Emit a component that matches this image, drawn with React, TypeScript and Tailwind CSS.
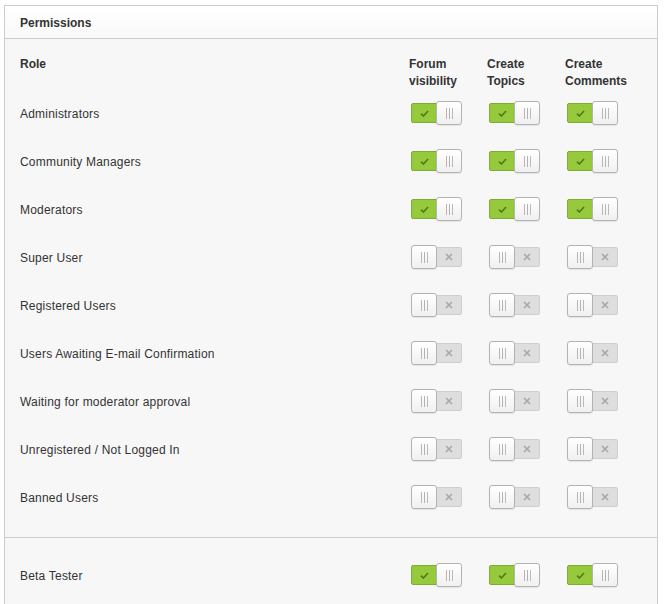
import React from "react";

const roles: { name: string; on: boolean }[] = [
  { name: "Administrators", on: true },
  { name: "Community Managers", on: true },
  { name: "Moderators", on: true },
  { name: "Super User", on: false },
  { name: "Registered Users", on: false },
  { name: "Users Awaiting E-mail Confirmation", on: false },
  { name: "Waiting for moderator approval", on: false },
  { name: "Unregistered / Not Logged In", on: false },
  { name: "Banned Users", on: false },
];

function Knob() {
  return (
    <div className="relative z-10 flex h-[24px] w-[26px] items-center justify-center gap-[2px] rounded-[3px] border border-[#b3b3b3] bg-gradient-to-b from-white to-[#f0f0f0] shadow-[0_1px_1px_rgba(0,0,0,0.08)]">
      <span className="h-[11px] w-[1px] bg-[#c9aeb2]" />
      <span className="h-[11px] w-[1px] bg-[#aab4c6]" />
      <span className="h-[11px] w-[1px] bg-[#bcbcac]" />
    </div>
  );
}

function Toggle({ on }: { on: boolean }) {
  if (on) {
    return (
      <div className="flex h-[24px] w-[51px] items-center">
        <div className="flex h-[20px] w-[26px] items-center justify-center rounded-l-[2px] border border-[#7fae2e] bg-[#97c93d]">
          <svg width="9" height="7" viewBox="0 0 9 7">
            <path d="M1 3.6 L3.4 6 L8 1" fill="none" stroke="#4f7a16" strokeWidth="1.6" />
          </svg>
        </div>
        <div className="-ml-[1px]">
          <Knob />
        </div>
      </div>
    );
  }
  return (
    <div className="flex h-[24px] w-[51px] items-center">
      <Knob />
      <div className="-ml-[1px] flex h-[20px] w-[26px] items-center justify-center rounded-r-[2px] border border-[#cfcfcf] bg-[#dedede]">
        <svg width="8" height="8" viewBox="0 0 8 8">
          <path d="M1 1 L7 7 M7 1 L1 7" fill="none" stroke="#a9a9a9" strokeWidth="1.7" />
        </svg>
      </div>
    </div>
  );
}

function Row({ name, on }: { name: string; on: boolean }) {
  return (
    <div className="grid h-[48px] grid-cols-[1fr_78px_78px_78px] items-center">
      <div className="tracking-[0.2px]">{name}</div>
      <div className="-mt-[2px] pl-[2px]"><Toggle on={on} /></div>
      <div className="-mt-[2px] pl-[2px]"><Toggle on={on} /></div>
      <div className="-mt-[2px] pl-[2px]"><Toggle on={on} /></div>
    </div>
  );
}

export default function App() {
  return (
    <div
      className="min-h-[604px] bg-white pl-[4px] pt-[5px] text-[12px] leading-[17px] text-[#333]"
      style={{ fontFamily: '"Liberation Sans", Arial, sans-serif' }}
    >
      <div className="w-[654px] border border-[#cccccc] bg-[#f7f7f7]">
        <div className="flex h-[33px] items-center border-b border-[#cccccc] bg-gradient-to-b from-white to-[#f9f9f9] pl-[15px] pt-[2px] font-bold">
          Permissions
        </div>
        <div className="pb-[15px] pl-[15px] pr-[14px] pt-[17px]">
          <div className="grid h-[34px] grid-cols-[1fr_78px_78px_78px] font-bold">
            <div>Role</div>
            <div>Forum<br />visibility</div>
            <div>Create<br />Topics</div>
            <div>Create<br />Comments</div>
          </div>
          {roles.map((r) => (
            <Row key={r.name} name={r.name} on={r.on} />
          ))}
        </div>
        <div className="border-t border-[#cccccc] pb-[20px] pl-[15px] pr-[14px] pt-[14px]">
          <Row name="Beta Tester" on={true} />
        </div>
      </div>
    </div>
  );
}
